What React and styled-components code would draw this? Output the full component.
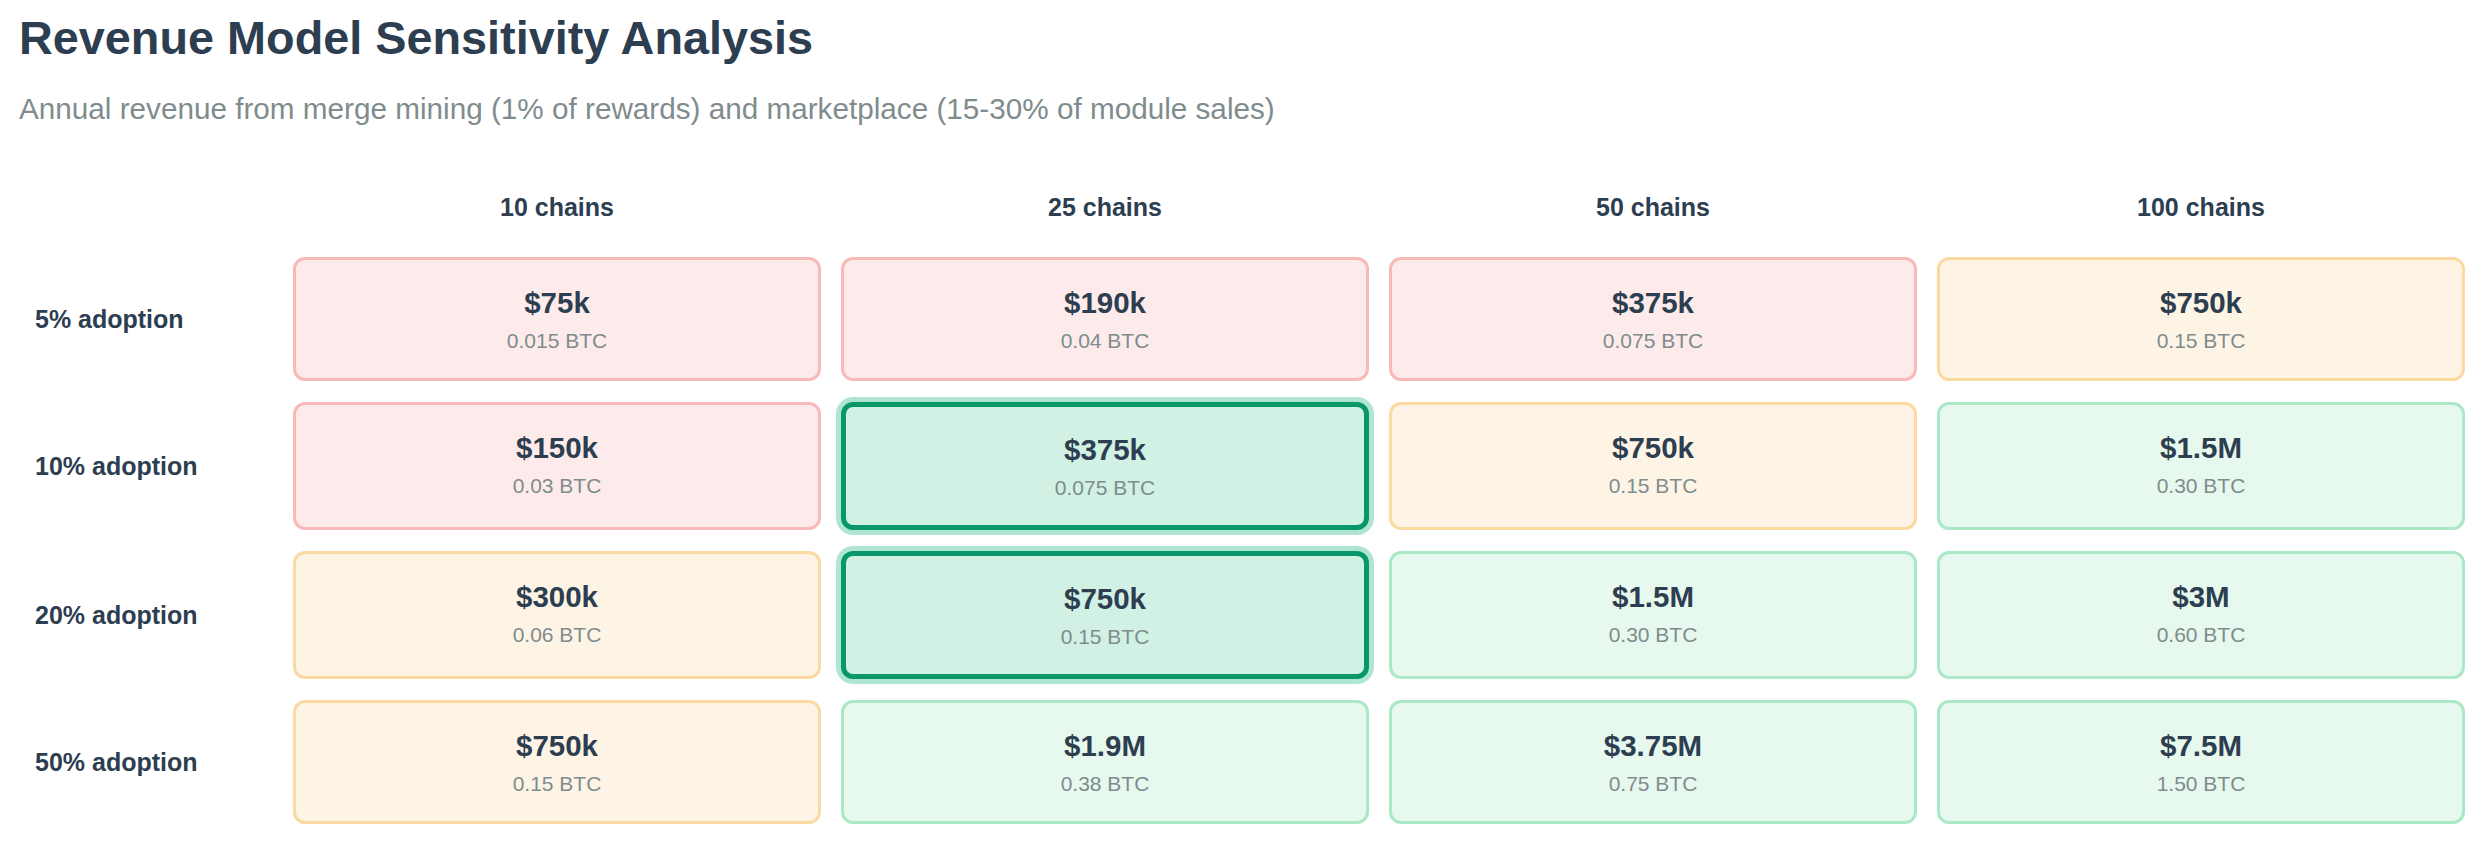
import React from 'react';
import styled, { createGlobalStyle, css } from 'styled-components';

const GlobalStyle = createGlobalStyle`
  html, body {
    margin: 0;
    padding: 0;
    background: #ffffff;
  }
  body {
    font-family: "Liberation Sans", Arial, sans-serif;
  }
`;

const Page = styled.div`
  padding: 12px 16px 20px 19px;
  box-sizing: border-box;
  width: 2481px;
`;

const Title = styled.h1`
  margin: 0;
  font-size: 46.8px;
  line-height: 52px;
  font-weight: bold;
  color: #2c3e50;
`;

const Subtitle = styled.p`
  margin: 28px 0 0;
  font-size: 29.7px;
  line-height: 34px;
  color: #7f8c8d;
`;

const Grid = styled.div`
  display: grid;
  grid-template-columns: 254px repeat(4, 1fr);
  column-gap: 20px;
  row-gap: 21px;
  margin-top: 66px;
`;

const ColHeader = styled.div`
  font-size: 25px;
  line-height: 30px;
  font-weight: bold;
  color: #2c3e50;
  text-align: center;
  padding-bottom: 14px;
`;

const RowLabel = styled.div`
  display: flex;
  align-items: center;
  padding-left: 16px;
  font-size: 25px;
  font-weight: bold;
  color: #2c3e50;
`;

const tones = {
  low: css`
    background: #fdebeb;
    border: 3px solid #f9b9b9;
  `,
  mid: css`
    background: #fef4e6;
    border: 3px solid #fcd9a0;
  `,
  high: css`
    background: #e7f8ee;
    border: 3px solid #abe8c5;
  `,
  best: css`
    background: #d0f1e4;
    border: 5px solid #07976a;
    box-shadow: 0 0 0 5px #b0e6cf;
  `,
};

const Cell = styled.div`
  border-radius: 12px;
  padding: 25px 10px;
  text-align: center;
  ${({ $tone }) => tones[$tone]}
`;

const Value = styled.div`
  font-size: 29.5px;
  line-height: 35px;
  font-weight: bold;
  color: #2c3e50;
`;

const Btc = styled.div`
  margin-top: 8px;
  font-size: 21px;
  line-height: 25px;
  color: #7f8c8d;
`;

const chains = ['10 chains', '25 chains', '50 chains', '100 chains'];

const rows = [
  {
    label: '5% adoption',
    cells: [
      ['$75k', '0.015 BTC', 'low'],
      ['$190k', '0.04 BTC', 'low'],
      ['$375k', '0.075 BTC', 'low'],
      ['$750k', '0.15 BTC', 'mid'],
    ],
  },
  {
    label: '10% adoption',
    cells: [
      ['$150k', '0.03 BTC', 'low'],
      ['$375k', '0.075 BTC', 'best'],
      ['$750k', '0.15 BTC', 'mid'],
      ['$1.5M', '0.30 BTC', 'high'],
    ],
  },
  {
    label: '20% adoption',
    cells: [
      ['$300k', '0.06 BTC', 'mid'],
      ['$750k', '0.15 BTC', 'best'],
      ['$1.5M', '0.30 BTC', 'high'],
      ['$3M', '0.60 BTC', 'high'],
    ],
  },
  {
    label: '50% adoption',
    cells: [
      ['$750k', '0.15 BTC', 'mid'],
      ['$1.9M', '0.38 BTC', 'high'],
      ['$3.75M', '0.75 BTC', 'high'],
      ['$7.5M', '1.50 BTC', 'high'],
    ],
  },
];

const App = () => (
  <>
    <GlobalStyle />
    <Page>
      <Title>Revenue Model Sensitivity Analysis</Title>
      <Subtitle>
        Annual revenue from merge mining (1% of rewards) and marketplace (15-30% of module sales)
      </Subtitle>
      <Grid>
        <div />
        {chains.map((c) => (
          <ColHeader key={c}>{c}</ColHeader>
        ))}
        {rows.map((row) => (
          <React.Fragment key={row.label}>
            <RowLabel>{row.label}</RowLabel>
            {row.cells.map(([value, btc, tone], i) => (
              <Cell key={i} $tone={tone}>
                <Value>{value}</Value>
                <Btc>{btc}</Btc>
              </Cell>
            ))}
          </React.Fragment>
        ))}
      </Grid>
    </Page>
  </>
);

export default App;
